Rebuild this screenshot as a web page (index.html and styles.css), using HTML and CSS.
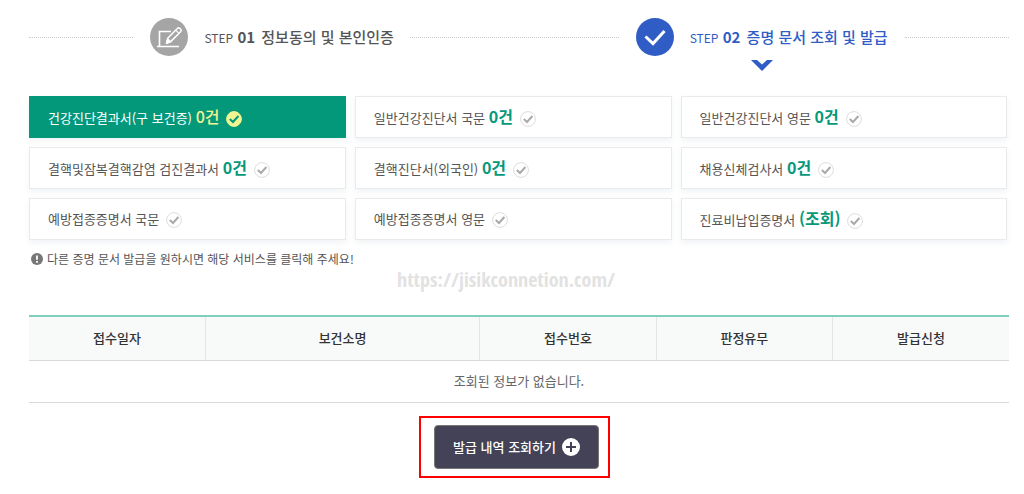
FILE: index.html
```html
<!DOCTYPE html>
<html lang="ko">
<head>
    <meta charset="UTF-8">
    <meta name="viewport" content="width=device-width, initial-scale=1.0">
    <title>증명 문서 조회 및 발급</title>
    <link rel="stylesheet" href="styles.css">
</head>
<body>
    <!-- shared check icon -->
    <svg class="sprite" aria-hidden="true">
        <symbol id="check" viewBox="0 0 16 16">
            <circle class="check-bg" cx="8" cy="8" r="7.4"/>
            <path class="check-mark" d="M3.8 8l3.200 3 5.400-6"/>
        </symbol>
    </svg>

    <div class="container">
        <ol class="steps">
            <li class="step">
                <svg class="step-icon" viewBox="0 0 38 38" aria-hidden="true">
                    <circle cx="19" cy="19" r="19" fill="#a5a5a5"/>
                    <path d="M21 13.500H9.500V28M7 28.500h22" fill="none" stroke="#fff" stroke-width="1.600"/>
                    <path d="M16.500 25.200l1.200-5L27.600 10.300q1.200-1 2.400.2l.8.8q1 1.200-.2 2.400L20.700 23.600z" fill="#a5a5a5" stroke="#fff" stroke-width="1.500" stroke-linejoin="round"/>
                    <path d="M25.800 12.200l3.100 3.100M16.500 25.200l1.200-4.500 3 3z" fill="#fff" stroke="#fff" stroke-width="1.200"/>
                </svg>
                <span class="step-text"><span class="step-label">STEP</span> <b>01</b> <span class="step-name">정보동의 및 본인인증</span></span>
            </li>
            <li class="step active">
                <svg class="step-icon" viewBox="0 0 38 38" aria-hidden="true">
                    <circle cx="19" cy="19" r="19" fill="#305dc5"/>
                    <path d="M9.500 18.500l7.500 7 11.500-12.500" fill="none" stroke="#fff" stroke-width="3"/>
                </svg>
                <span class="step-text"><span class="step-label">STEP</span> <b>02</b> <span class="step-name">증명 문서 조회 및 발급</span></span>
                <svg class="step-arrow" viewBox="0 0 22 11" aria-hidden="true"><path d="M0 0h6l5 4.500L16 0h6L11 11z" fill="#305dc5"/></svg>
            </li>
        </ol>

        <div class="docs">
            <button type="button" class="doc selected">건강진단결과서(구 보건증) <strong>0건</strong><svg class="check"><use href="#check"/></svg></button>
            <button type="button" class="doc">일반건강진단서 국문 <strong>0건</strong><svg class="check"><use href="#check"/></svg></button>
            <button type="button" class="doc">일반건강진단서 영문 <strong>0건</strong><svg class="check"><use href="#check"/></svg></button>
            <button type="button" class="doc">결핵및잠복결핵감염 검진결과서 <strong>0건</strong><svg class="check"><use href="#check"/></svg></button>
            <button type="button" class="doc">결핵진단서(외국인) <strong>0건</strong><svg class="check"><use href="#check"/></svg></button>
            <button type="button" class="doc">채용신체검사서 <strong>0건</strong><svg class="check"><use href="#check"/></svg></button>
            <button type="button" class="doc">예방접종증명서 국문<svg class="check"><use href="#check"/></svg></button>
            <button type="button" class="doc">예방접종증명서 영문<svg class="check"><use href="#check"/></svg></button>
            <button type="button" class="doc">진료비납입증명서 <strong>(조회)</strong><svg class="check"><use href="#check"/></svg></button>
        </div>

        <p class="notice">
            <svg class="notice-icon" viewBox="0 0 12 12" aria-hidden="true"><circle cx="6" cy="6" r="6" fill="#777"/><path d="M6 2.500v4.200M6 8v1.700" stroke="#fff" stroke-width="1.800"/></svg>
            다른 증명 문서 발급을 원하시면 해당 서비스를 클릭해 주세요!
        </p>
        <p class="watermark">https://jisikconnetion.com/</p>

        <table class="result">
            <thead>
                <tr>
                    <th scope="col">접수일자</th>
                    <th scope="col" class="wide">보건소명</th>
                    <th scope="col">접수번호</th>
                    <th scope="col">판정유무</th>
                    <th scope="col">발급신청</th>
                </tr>
            </thead>
            <tbody>
                <tr>
                    <td colspan="5">조회된 정보가 없습니다.</td>
                </tr>
            </tbody>
        </table>

        <div class="actions">
            <div class="highlight">
                <button type="button" class="search-btn">발급 내역 조회하기
                    <svg class="plus" viewBox="0 0 18 18" aria-hidden="true"><circle cx="9" cy="9" r="9" fill="#fff"/><path d="M9 4v10M4 9h10" stroke="#434257" stroke-width="2"/></svg>
                </button>
            </div>
        </div>
    </div>
</body>
</html>
```
FILE: styles.css
```css
* {
    box-sizing: border-box;
}

body {
    margin: 0;
    background-color: #fff;
    color: #555;
    font-family: "Noto Sans CJK KR", "Noto Sans", sans-serif;
    font-size: 13px;
    line-height: 20px;
}

button {
    font: inherit;
    cursor: pointer;
}

.sprite {
    display: none;
}

.container {
    padding: 18px 15px 16px 29px;
}

/* steps */
.steps {
    display: flex;
    align-items: center;
    gap: 17px;
    margin: 0;
    padding: 0;
    list-style: none;
}

.steps::before,
.steps::after {
    content: "";
    flex: 1;
    border-top: 1px dotted #ccc;
}

.step {
    position: relative;
    display: flex;
    align-items: center;
    gap: 16px;
}

.step:first-child {
    flex: 2 0 auto;
}

.step:first-child::after {
    content: "";
    flex: 1;
    border-top: 1px dotted #ccc;
}

.step-icon {
    width: 38px;
    height: 38px;
}

.step-text {
    font-size: 15px;
    font-weight: 500;
    white-space: nowrap;
}

.step-label {
    font-size: 12px;
    font-weight: 400;
}

.step-name {
    margin-left: 2px;
}

.active {
    color: #305dc5;
}

.step-arrow {
    position: absolute;
    top: 42px;
    left: 50%;
    width: 22px;
    height: 11px;
    transform: translateX(-50%);
}

/* document list */
.docs {
    display: grid;
    grid-template-columns: 33fr 33fr 34fr;
    gap: 9px;
    margin-top: 40px;
    padding-right: 2px;
}

.doc {
    height: 42px;
    padding: 0 18px;
    border: 1px solid #e8eaec;
    background-color: #fff;
    box-shadow: 0 3px 6px rgba(60, 80, 120, 0.07);
    color: #555;
    text-align: left;
    white-space: nowrap;
}

.doc strong {
    color: #06987a;
    font-size: 16px;
    font-weight: 700;
}

.check {
    width: 16px;
    height: 16px;
    margin-left: 7px;
    vertical-align: -4px;
}

.check-bg {
    fill: var(--check-bg, #fff);
    stroke: var(--check-border, #ddd);
}

.check-mark {
    fill: none;
    stroke: var(--check-mark, #aaa);
    stroke-width: 2;
}

.selected {
    --check-bg: #f0f591;
    --check-border: #f0f591;
    --check-mark: #03987a;
    border-color: #06987a;
    background-color: #03987a;
    color: #fff;
}

.selected strong {
    color: #f0f591;
    font-weight: 500;
}

.notice {
    display: flex;
    align-items: center;
    gap: 4px;
    margin: 9px 0 0 2px;
    font-size: 12px;
}

.notice-icon {
    width: 12px;
    height: 12px;
}

.watermark {
    margin: 1px 0 0 368px;
    color: #e2e2e2;
    font-family: Impact, "Liberation Sans Narrow", "Open Sans Condensed", "Liberation Sans", sans-serif;
    font-size: 20px;
    font-weight: 800;
}

/* result table */
.result {
    width: 100%;
    margin-top: 25px;
    border-collapse: collapse;
    border-top: 2px solid #7fcfba;
    table-layout: fixed;
    text-align: center;
}

.result th {
    width: 18%;
    height: 44px;
    padding: 0;
    border-left: 1px solid #e2e6e6;
    border-bottom: 1px solid #d9d9d9;
    background-color: #f8f9f9;
    color: #333;
    font-weight: 500;
}

.result .wide {
    width: 28%;
}

.result th:first-child {
    border-left: none;
}

.result td {
    height: 42px;
    padding: 0;
    border-bottom: 1px solid #d9d9d9;
    color: #666;
}

.actions {
    display: flex;
    justify-content: center;
    margin-top: 13px;
    padding-right: 9px;
}

.highlight {
    padding: 7px 9px 7px 13px;
    border: 2px solid #f00;
}

.search-btn {
    display: flex;
    align-items: center;
    gap: 6px;
    height: 44px;
    padding: 0 18px;
    border: 1px solid #777;
    border-radius: 4px;
    background-color: #434257;
    color: #fff;
    font-weight: 500;
}

.plus {
    width: 18px;
    height: 18px;
}
```
